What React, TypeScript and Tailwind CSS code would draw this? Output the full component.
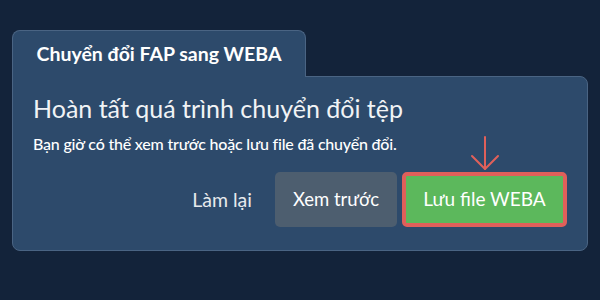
export default function App() {
  return (
    <div
      className="w-[600px] h-[300px] bg-[#13233a] px-3 pt-[30px]"
      style={{ fontFamily: "Lato, 'Noto Sans', sans-serif" }}
    >
      {/* tab */}
      <div className="relative z-10 -mb-px flex h-[47px] w-[294px] items-center justify-center rounded-t-lg border border-b-0 border-[#4a6483] bg-[#2d4a6b]">
        <span className="text-[19.5px] font-bold text-white">Chuyển đổi FAP sang WEBA</span>
      </div>

      {/* card */}
      <div className="h-[175px] w-[576px] rounded-lg rounded-tl-none border border-[#4a6483] bg-[#2d4a6b] px-5 pt-[15px]">
        <h1 className="text-[25px] leading-8 text-[#f1f3f5]">Hoàn tất quá trình chuyển đổi tệp</h1>
        <p className="mt-[10px] text-[16px] font-medium leading-5 tracking-[-0.2px] text-white">
          Bạn giờ có thể xem trước hoặc lưu file đã chuyển đổi.
        </p>
        <div className="mt-[18px] flex items-center justify-end">
          <button className="mr-[19px] px-1 text-[19.5px] text-[#e6e9ec]">Làm lại</button>
          <button className="h-[55px] w-[122px] rounded-[5px] bg-[#4d5e6f] text-[18.5px] text-white">
            Xem trước
          </button>
          <div className="relative ml-[5px]">
            <svg
              className="absolute left-1/2 top-[-36px] h-[36px] w-[30px] -translate-x-1/2"
              viewBox="0 0 30 36"
              fill="none"
              stroke="#e0605a"
              strokeWidth={2}
              strokeLinecap="round"
              strokeLinejoin="round"
            >
              <path d="M15 1 V33" />
              <path d="M2 20 L15 33 L28 20" />
            </svg>
            <button className="h-[55px] w-[165px] rounded-[5px] border-[4px] border-[#e0605a] bg-[#5cb85c] text-[19px] text-white">
              Lưu file WEBA
            </button>
          </div>
        </div>
      </div>
    </div>
  );
}
